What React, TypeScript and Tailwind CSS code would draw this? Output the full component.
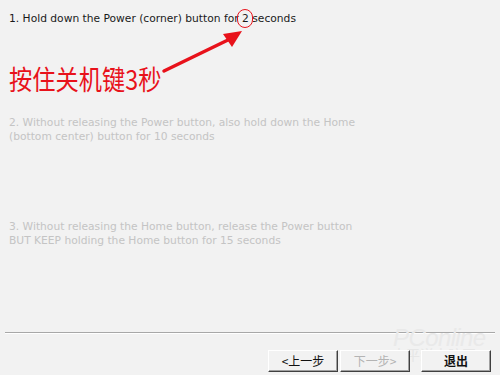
import React from "react";

const tahoma = { fontFamily: "Tahoma, 'DejaVu Sans', sans-serif" };

function WinButton({ label, disabled, bold }: { label: string; disabled?: boolean; bold?: boolean }) {
  return (
    <div className="w-[70px] h-[22px] bg-[#f2f2f2] border-t border-l border-t-white border-l-white border-b border-r border-b-[#404040] border-r-[#404040] shadow-[inset_-1px_-1px_0_#a0a0a0]">
      <div
        className={`h-full flex items-center justify-center text-[12px] ${disabled ? "text-[#b4b4b4]" : "text-[#111]"} ${bold ? "font-bold" : ""}`}
        style={{ fontFamily: "'Noto Sans CJK SC', sans-serif" }}
      >
        {label}
      </div>
    </div>
  );
}

export default function App() {
  return (
    <div className="relative w-[500px] h-[375px] bg-[#f2f2f2] overflow-hidden" style={tahoma}>
      <div className="flex flex-col pl-[9px] text-[10.7px] leading-[14px]">
        <p className="mt-[12px] text-[#1a1a1a]">
          1. Hold down the Power (corner) button for{" "}
          <span className="relative inline-block">
            2
            <span className="absolute left-[-5px] top-[-3px] w-[16px] h-[19px] rounded-full border border-[#e8121b]" />
          </span>{" "}
          seconds
        </p>

        <p
          className="mt-[37px] h-[30px] text-[25px] leading-[30px] text-[#e8121b] origin-left scale-x-[0.93] scale-y-[1.1]"
          style={{ fontFamily: "'Noto Sans CJK SC', sans-serif" }}
        >
          按住关机键3秒
        </p>

        <div className="mt-[23px] text-[#c4c4c4]">
          <p>2. Without releasing the Power button, also hold down the Home</p>
          <p>(bottom center) button for 10 seconds</p>
        </div>

        <div className="mt-[76px] text-[#c4c4c4]">
          <p>3. Without releasing the Home button, release the Power button</p>
          <p>BUT KEEP holding the Home button for 15 seconds</p>
        </div>
      </div>

      {/* etched separator */}
      <div className="absolute left-[5px] right-[5px] top-[332px] h-[2px] border-t border-t-[#a8a8a8] border-b border-b-white" />

      {/* watermark */}
      <div className="absolute left-[393px] top-[320px] text-[24px] italic text-[#e9e9e9] tracking-tight" style={{ fontFamily: "'Liberation Sans', sans-serif" }}>
        PConline
      </div>
      <div className="absolute left-[392px] top-[344px] text-[14px] text-[#e6e6e6]" style={{ fontFamily: "'Noto Sans CJK SC', sans-serif" }}>
        太平洋电脑网
      </div>

      <div className="absolute left-[268px] top-[350px] flex">
        <WinButton label="<上一步" />
        <div className="w-[2px]" />
        <WinButton label="下一步>" disabled />
        <div className="w-[11px]" />
        <WinButton label="退出" bold />
      </div>

      {/* red arrow */}
      <svg className="absolute left-0 top-0" width="500" height="375" viewBox="0 0 500 375">
        <line x1="164" y1="71" x2="230" y2="39" stroke="#e8121b" strokeWidth="3.5" strokeLinecap="round" />
        <polygon points="242,31 223,34 232,47" fill="#e8121b" />
      </svg>
    </div>
  );
}
